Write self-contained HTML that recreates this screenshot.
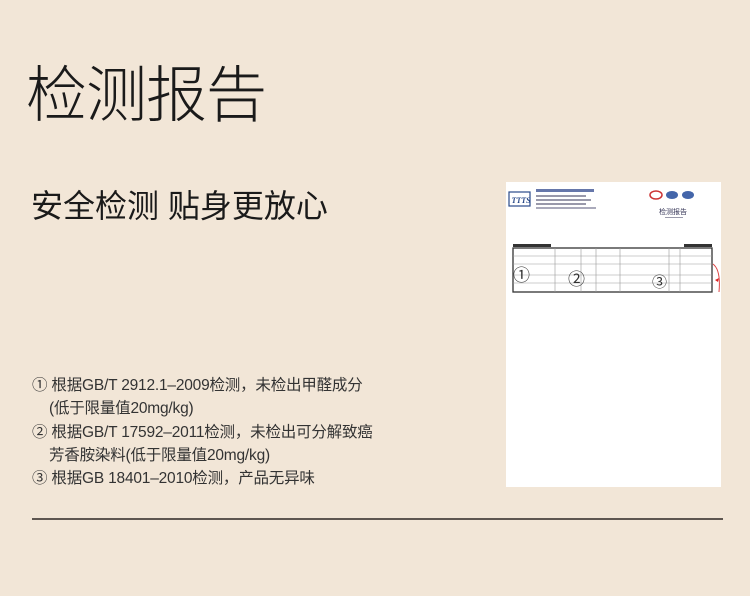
<!DOCTYPE html>
<html><head><meta charset="utf-8"><style>
body{margin:0;width:750px;height:596px;background:#f2e6d7;position:relative;overflow:hidden;font-family:"Liberation Sans","Noto Sans CJK SC",sans-serif;color:#222}
.t{position:absolute;left:26px;top:65px;font-size:61px;font-weight:300;letter-spacing:-1px;line-height:1;color:#1a1a1a}
.s{position:absolute;left:31px;top:190px;font-size:32px;line-height:1;color:#1a1a1a;font-weight:400}
.l{position:absolute;left:32px;top:374px;font-size:15.5px;line-height:23.3px;color:#333;letter-spacing:-0.2px}
.l div.i{padding-left:17px}
.doc{position:absolute;left:506px;top:182px;width:215px;height:305px;background:#fff}
.hr{position:absolute;left:32px;top:518px;width:691px;height:2px;background:#5e5650}
</style></head><body>
<div class="t">检测报告</div>
<div class="s">安全检测 贴身更放心</div>
<div class="l">
<div>① 根据GB/T 2912.1–2009检测，未检出甲醛成分</div>
<div class="i">(低于限量值20mg/kg)</div>
<div>② 根据GB/T 17592–2011检测，未检出可分解致癌</div>
<div class="i">芳香胺染料(低于限量值20mg/kg)</div>
<div>③ 根据GB 18401–2010检测，产品无异味</div>
</div>
<div class="doc">
<svg width="215" height="305" viewBox="0 0 215 305">
<rect x="3" y="10" width="21" height="14" fill="none" stroke="#2a4a8a" stroke-width="1.2"/>
<text x="5.5" y="21" font-size="8" font-style="italic" font-weight="bold" fill="#2a4a8a" font-family="Liberation Serif">TTTS</text>
<rect x="30" y="7" width="58" height="3" fill="#6677aa"/>
<rect x="30" y="13" width="50" height="2" fill="#99a"/>
<rect x="30" y="17" width="55" height="2" fill="#99a"/>
<rect x="30" y="21" width="50" height="2" fill="#99a"/>
<rect x="30" y="25" width="60" height="2" fill="#aab"/>
<ellipse cx="150" cy="13" rx="6" ry="4" fill="none" stroke="#c33" stroke-width="1.5"/>
<ellipse cx="166" cy="13" rx="6" ry="4" fill="#4466aa"/>
<ellipse cx="182" cy="13" rx="6" ry="4" fill="#4466aa"/>
<text x="153" y="32" font-size="7" fill="#335" font-family="Noto Sans CJK SC">检测报告</text>
<rect x="159" y="35" width="18" height="1" fill="#99a"/>
<rect x="7" y="62" width="38" height="3" fill="#333"/>
<rect x="178" y="62" width="28" height="3" fill="#333"/>
<rect x="7" y="66" width="199" height="44" fill="none" stroke="#333" stroke-width="1.3"/>
<g stroke="#999" stroke-width="0.6">
<line x1="7" y1="74" x2="206" y2="74"/><line x1="7" y1="82" x2="206" y2="82"/><line x1="7" y1="93" x2="206" y2="93"/><line x1="7" y1="101" x2="206" y2="101"/>
<line x1="49" y1="66" x2="49" y2="110"/><line x1="75" y1="66" x2="75" y2="110"/><line x1="90" y1="66" x2="90" y2="110"/><line x1="114" y1="66" x2="114" y2="110"/><line x1="163" y1="66" x2="163" y2="110"/><line x1="174" y1="66" x2="174" y2="110"/>
</g>
<text x="7" y="99" font-size="17" fill="#333">①</text>
<text x="62" y="103" font-size="17" fill="#333">②</text>
<text x="146" y="105" font-size="15" fill="#333">③</text>
<path d="M207 82 q8 6 6 28" fill="none" stroke="#d44" stroke-width="1"/>
<path d="M209 98 l4 -2 l-1 4z" fill="#d22"/>
</svg>
</div>
<div class="hr"></div>
</body></html>
